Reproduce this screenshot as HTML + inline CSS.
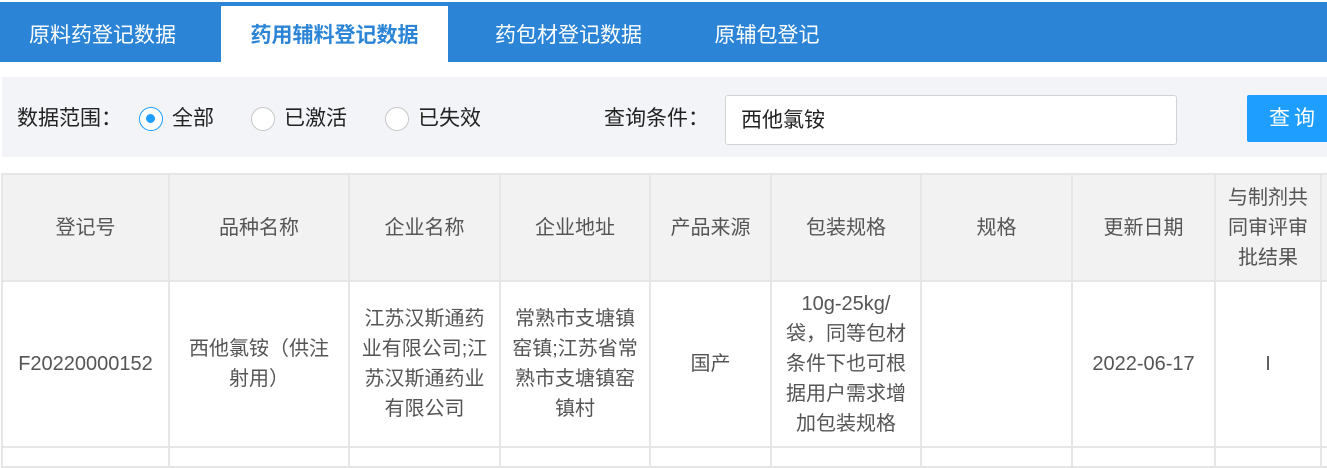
<!DOCTYPE html>
<html><head><meta charset="utf-8"><style>
*{margin:0;padding:0;box-sizing:border-box}
body{width:1327px;height:454px;overflow:hidden;background:#fff;font-family:"Liberation Sans","Noto Sans CJK SC",sans-serif;position:relative;color:#333}
.bar{position:absolute;left:0;top:2px;width:1327px;height:60px;background:#2b84d6}
.tab{position:absolute;top:2px;height:60px;line-height:68px;font-size:21px;color:#fff;text-align:center}
.tab.on{top:6px;height:56px;line-height:60px;background:#fff;color:#2b84d6;font-weight:bold}
.panel{position:absolute;left:2px;top:77px;width:1325px;height:80px;background:#f3f4f8;font-size:21px;color:#222}
.panel span{position:absolute;top:30px;line-height:24px}
.rad{position:absolute;top:30px;width:24px;height:24px;border-radius:50%;border:1.5px solid #c8c8c8;background:#fff}
.rad.on{border-color:#1e9fff}
.rad.on:after{content:"";position:absolute;left:6px;top:6px;width:9px;height:9px;border-radius:50%;background:#1e9fff}
.inp{position:absolute;left:723px;top:18px;width:452px;height:50px;border:1px solid #d2d2d2;border-radius:3px;background:#fff;padding-left:15px;line-height:50px}
.btn{position:absolute;left:1245px;top:18px;width:90px;height:47px;background:#1e9fff;color:#fff;border-radius:2px;line-height:47px;padding-left:22px;letter-spacing:4px}
table{position:absolute;left:1px;top:173px;width:1339px;border-collapse:collapse;font-size:20px;color:#555;table-layout:fixed}
td{border:2px solid #e6e6e6;text-align:center;vertical-align:middle;line-height:30px;padding:0 14px;word-break:break-all}
tr.h td{background:#f2f2f2;height:107px}
tr.r td{height:166px}
tr.e td{height:20px}
</style></head><body>
<div class="bar"></div>
<div class="tab" style="left:0;width:205px">原料药登记数据</div>
<div class="tab on" style="left:221px;width:227px">药用辅料登记数据</div>
<div class="tab" style="left:455px;width:227px">药包材登记数据</div>
<div class="tab" style="left:682px;width:170px">原辅包登记</div>
<div class="panel">
<span style="left:15px">数据范围：</span>
<div class="rad on" style="left:137px"></div><span style="left:170px">全部</span>
<div class="rad" style="left:249px"></div><span style="left:282px">已激活</span>
<div class="rad" style="left:383px"></div><span style="left:416px">已失效</span>
<span style="left:602px">查询条件：</span>
<div class="inp">西他氯铵</div>
<div class="btn">查询</div>
</div>
<table>
<colgroup><col style="width:167px"><col style="width:180px"><col style="width:151px"><col style="width:150px"><col style="width:121px"><col style="width:150px"><col style="width:151px"><col style="width:143px"><col style="width:106px"><col style="width:20px"></colgroup>
<tr class="h"><td>登记号</td><td>品种名称</td><td>企业名称</td><td>企业地址</td><td>产品来源</td><td>包装规格</td><td>规格</td><td>更新日期</td><td style="padding:0 8px">与制剂共同审评审批结果</td><td></td></tr>
<tr class="r"><td style="padding:0 4px">F20220000152</td><td style="padding:0 16px">西他氯铵（供注射用）</td><td style="padding:0 8px">江苏汉斯通药<br>业有限公司;江<br>苏汉斯通药业<br>有限公司</td><td style="padding:0 8px">常熟市支塘镇<br>窑镇;江苏省常<br>熟市支塘镇窑<br>镇村</td><td>国产</td><td style="padding:0 12px">10g-25kg/<br>袋，同等包材条件下也可根据用户需求增加包装规格</td><td></td><td>2022-06-17</td><td>I</td><td></td></tr>
<tr class="e"><td></td><td></td><td></td><td></td><td></td><td></td><td></td><td></td><td></td><td></td></tr>
</table>
</body></html>
